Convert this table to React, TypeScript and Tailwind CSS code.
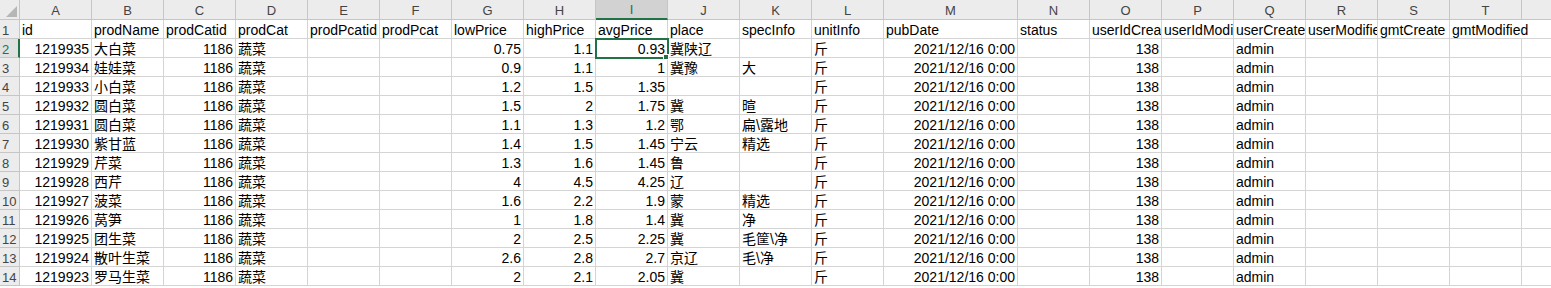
import React from "react";

const COLS = "ABCDEFGHIJKLMNOPQRSTU".split("");

const HEADER = [
  "id", "prodName", "prodCatid", "prodCat", "prodPcatid", "prodPcat", "lowPrice", "highPrice",
  "avgPrice", "place", "specInfo", "unitInfo", "pubDate", "status", "userIdCreate",
  "userIdModified", "userCreate", "userModified", "gmtCreate", "gmtModified", "",
];

const RAW: [string, string, string, string, string, string, string][] = [
  ["1219935", "大白菜", "0.75", "1.1", "0.93", "冀陕辽", ""],
  ["1219934", "娃娃菜", "0.9", "1.1", "1", "冀豫", "大"],
  ["1219933", "小白菜", "1.2", "1.5", "1.35", "", ""],
  ["1219932", "圆白菜", "1.5", "2", "1.75", "冀", "暄"],
  ["1219931", "圆白菜", "1.1", "1.3", "1.2", "鄂", "扁\\露地"],
  ["1219930", "紫甘蓝", "1.4", "1.5", "1.45", "宁云", "精选"],
  ["1219929", "芹菜", "1.3", "1.6", "1.45", "鲁", ""],
  ["1219928", "西芹", "4", "4.5", "4.25", "辽", ""],
  ["1219927", "菠菜", "1.6", "2.2", "1.9", "蒙", "精选"],
  ["1219926", "莴笋", "1", "1.8", "1.4", "冀", "净"],
  ["1219925", "团生菜", "2", "2.5", "2.25", "冀", "毛筐\\净"],
  ["1219924", "散叶生菜", "2.6", "2.8", "2.7", "京辽", "毛\\净"],
  ["1219923", "罗马生菜", "2", "2.1", "2.05", "冀", ""],
];

const ROWS: string[][] = RAW.map(([id, name, lo, hi, avg, place, spec]) => [
  id, name, "1186", "蔬菜", "", "", lo, hi, avg, place, spec, "斤", "2021/12/16 0:00", "", "138", "", "admin", "", "", "", "",
]);

const RIGHT = new Set([0, 2, 6, 7, 8, 12, 14]);

const FONT = { fontFamily: '"Liberation Sans", "Noto Sans CJK SC", Arial, sans-serif' };

function ColHeader({ letter, selected }: { letter: string; selected: boolean }) {
  if (selected) {
    return (
      <div className="h-[20px] border-r border-r-[#c6c6c6] border-b-2 border-b-[#217346] bg-[#d2d2d2] text-center text-[13px] leading-[16px] pt-[2px] text-[#217346]">
        {letter}
      </div>
    );
  }
  return (
    <div className="h-[20px] border-r border-b border-[#c6c6c6] bg-[#ececec] text-center text-[13px] leading-[16px] pt-[3px] text-[#444444]">
      {letter}
    </div>
  );
}

function RowHeader({ n, selected }: { n: number; selected: boolean }) {
  if (selected) {
    return (
      <div className="h-[19px] border-b border-b-[#c6c6c6] border-r-2 border-r-[#217346] bg-[#e1e1e1] pl-[2px] pt-[2px] text-[13px] leading-[17px] text-[#217346] overflow-hidden whitespace-nowrap">
        {n}
      </div>
    );
  }
  return (
    <div className="h-[19px] border-r border-b border-[#c6c6c6] bg-[#ececec] pl-[2px] pt-[2px] text-[13px] leading-[17px] text-[#444444] overflow-hidden whitespace-nowrap">
      {n}
    </div>
  );
}

export default function App() {
  return (
    <div className="w-[1551px] h-[288px] overflow-hidden bg-white" style={FONT}>
      <div className="grid grid-cols-[20px_repeat(12,72px)_134px_repeat(8,72px)] grid-rows-[20px_repeat(14,19px)] w-max">
        {/* corner */}
        <div className="relative h-[20px] border-r border-b border-[#c6c6c6] bg-[#ececec]">
          <svg className="absolute left-0 top-0" width="20" height="20" viewBox="0 0 20 20">
            <polygon points="6,17 17,17 17,6" fill="#b6b6b6" />
          </svg>
        </div>
        {COLS.map((c) => (
          <ColHeader key={c} letter={c === "U" ? "" : c} selected={c === "I"} />
        ))}

        {/* row 1: header texts */}
        <RowHeader n={1} selected={false} />
        {HEADER.map((t, i) => {
          const overflow = i === 19;
          return (
            <div
              key={i}
              className={
                overflow
                  ? "relative z-10 h-[19px] border-b border-[#d4d4d4] whitespace-nowrap overflow-visible px-[2px] pt-[2px] text-[14px] leading-[17px] text-black"
                  : "h-[19px] border-r border-b border-[#d4d4d4] whitespace-nowrap overflow-hidden px-[2px] pt-[2px] text-[14px] leading-[17px] text-black"
              }
            >
              {t}
            </div>
          );
        })}

        {ROWS.map((row, ri) => (
          <React.Fragment key={ri}>
            <RowHeader n={ri + 2} selected={ri === 0} />
            {row.map((v, ci) => {
              const isSel = ri === 0 && ci === 8;
              return (
                <div
                  key={ci}
                  className={
                    "h-[19px] border-r border-b border-[#d4d4d4] whitespace-nowrap px-[2px] pt-[2px] text-[14px] leading-[17px] text-black " +
                    (RIGHT.has(ci) ? "text-right " : "text-left ") +
                    (isSel ? "relative overflow-visible" : "overflow-hidden")
                  }
                >
                  {v}
                  {isSel && (
                    <div className="absolute left-[-1px] top-[-1px] z-20 h-[21px] w-[74px] border-2 border-[#217346]">
                      <div className="absolute left-[66px] top-[14px] h-[6px] w-[6px] border border-white bg-[#217346]" />
                    </div>
                  )}
                </div>
              );
            })}
          </React.Fragment>
        ))}
      </div>
    </div>
  );
}
